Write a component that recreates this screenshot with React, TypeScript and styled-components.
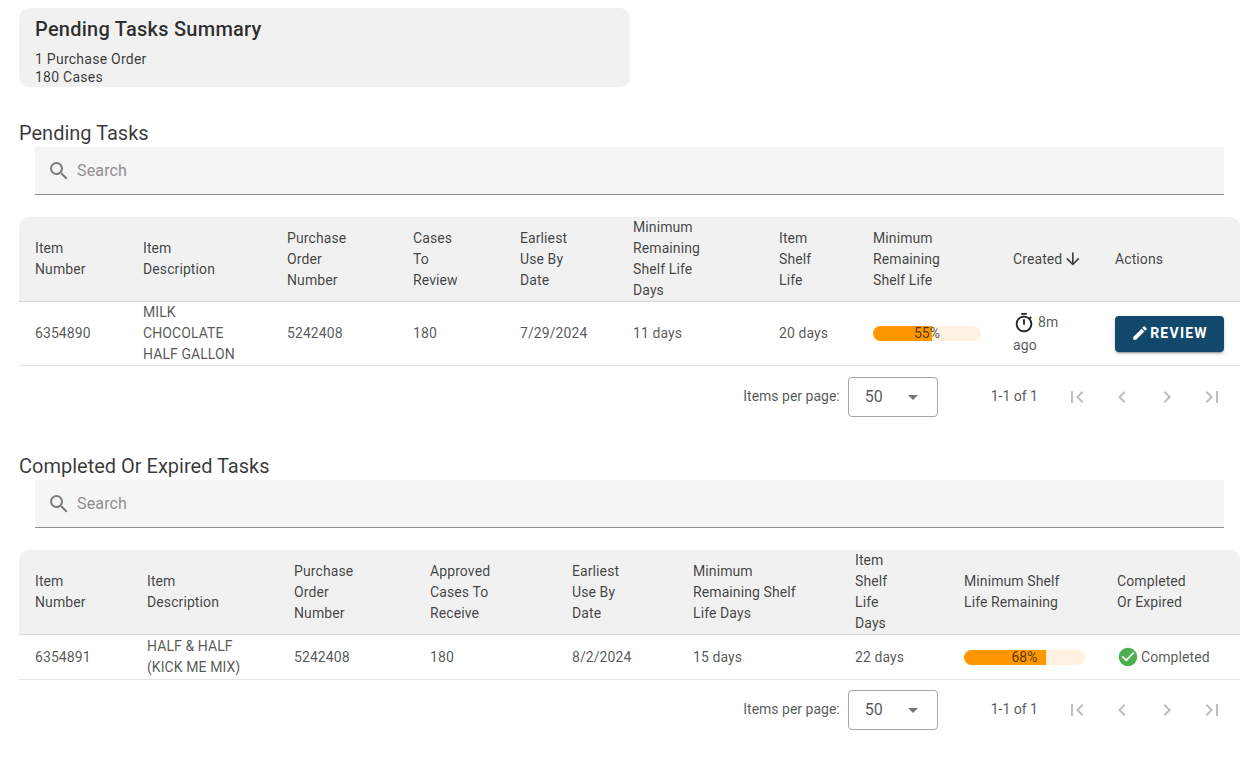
import React from "react";
import styled, { createGlobalStyle } from "styled-components";
import {
	MdArrowDownward,
	MdCheckCircle,
	MdChevronLeft,
	MdChevronRight,
	MdEdit,
	MdFirstPage,
	MdLastPage,
	MdOutlineTimer,
	MdSearch,
} from "react-icons/md";

const GlobalStyle = createGlobalStyle`
	html, body {
		margin: 0;
		padding: 0;
		background: #fff;
		font-family: Roboto, "Liberation Sans", sans-serif;
		color: rgba(0, 0, 0, 0.87);
	}
`;

const pendingColumns = [108, 144, 126, 107, 113, 146, 94, 140, 102, 141];
const completedColumns = [112, 147, 136, 142, 121, 162, 109, 153, 139];

const Lines = ({ lines }: { lines: string[] }) => (
	<>
		{lines.map((line) => (
			<div key={line}>{line}</div>
		))}
	</>
);

const Colgroup = ({ widths }: { widths: number[] }) => (
	<colgroup>
		{widths.map((w, i) => (
			<col key={i} style={{ width: w }} />
		))}
	</colgroup>
);

const Progress = ({ value, width }: { value: number; width: number }) => (
	<Track $width={width}>
		<Fill style={{ width: `${value}%` }} />
		<TrackLabel>{value}%</TrackLabel>
	</Track>
);

const SearchField = () => (
	<SearchBox>
		<MdSearch size={24} color="#7a7a7a" />
		<SearchText>Search</SearchText>
	</SearchBox>
);

const Paginator = ({ height }: { height: number }) => (
	<PaginatorBar $height={height}>
		<PerPageLabel>Items per page:</PerPageLabel>
		<PerPageSelect>
			<PerPageValue>50</PerPageValue>
			<Caret />
		</PerPageSelect>
		<RangeLabel>1-1 of 1</RangeLabel>
		<PageIcons>
			<MdFirstPage size={24} />
			<MdChevronLeft size={24} />
			<MdChevronRight size={24} />
			<MdLastPage size={24} />
		</PageIcons>
	</PaginatorBar>
);

const pendingHeaders = [
	["Item", "Number"],
	["Item", "Description"],
	["Purchase", "Order", "Number"],
	["Cases", "To", "Review"],
	["Earliest", "Use By", "Date"],
	["Minimum", "Remaining", "Shelf Life", "Days"],
	["Item", "Shelf", "Life"],
	["Minimum", "Remaining", "Shelf Life"],
];

const completedHeaders = [
	["Item", "Number"],
	["Item", "Description"],
	["Purchase", "Order", "Number"],
	["Approved", "Cases To", "Receive"],
	["Earliest", "Use By", "Date"],
	["Minimum", "Remaining Shelf", "Life Days"],
	["Item", "Shelf", "Life", "Days"],
	["Minimum Shelf", "Life Remaining"],
	["Completed", "Or Expired"],
];

const App = () => (
	<Page>
		<GlobalStyle />
		<SummaryCard>
			<SummaryTitle>Pending Tasks Summary</SummaryTitle>
			<SummaryLine>1 Purchase Order</SummaryLine>
			<SummaryLine>180 Cases</SummaryLine>
		</SummaryCard>

		<Section>
			<SectionTitle>Pending Tasks</SectionTitle>
			<SearchField />
			<Table>
				<Colgroup widths={pendingColumns} />
				<thead>
					<tr>
						{pendingHeaders.map((lines, i) => (
							<HeadCell key={i}>
								<Lines lines={lines} />
							</HeadCell>
						))}
						<HeadCell>
							<SortLabel>
								Created
								<MdArrowDownward size={20} />
							</SortLabel>
						</HeadCell>
						<HeadCell>Actions</HeadCell>
					</tr>
				</thead>
				<tbody>
					<tr>
						<BodyCell>6354890</BodyCell>
						<BodyCell>
							<Lines lines={["MILK", "CHOCOLATE", "HALF GALLON"]} />
						</BodyCell>
						<BodyCell>5242408</BodyCell>
						<BodyCell>180</BodyCell>
						<BodyCell>7/29/2024</BodyCell>
						<BodyCell>11 days</BodyCell>
						<BodyCell>20 days</BodyCell>
						<BodyCell>
							<Progress value={55} width={108} />
						</BodyCell>
						<BodyCell>
							<TimerLine>
								<MdOutlineTimer size={22} color="#222" />
								<TimerValue>8m</TimerValue>
							</TimerLine>
							<div>ago</div>
						</BodyCell>
						<BodyCell>
							<ReviewButton>
								<MdEdit size={18} />
								REVIEW
							</ReviewButton>
						</BodyCell>
					</tr>
				</tbody>
			</Table>
			<Paginator height={62} />
		</Section>

		<Section>
			<SectionTitle>Completed Or Expired Tasks</SectionTitle>
			<SearchField />
			<Table>
				<Colgroup widths={completedColumns} />
				<thead>
					<tr>
						{completedHeaders.map((lines, i) => (
							<HeadCell key={i}>
								<Lines lines={lines} />
							</HeadCell>
						))}
					</tr>
				</thead>
				<tbody>
					<tr>
						<BodyCell>6354891</BodyCell>
						<BodyCell>
							<Lines lines={["HALF & HALF", "(KICK ME MIX)"]} />
						</BodyCell>
						<BodyCell>5242408</BodyCell>
						<BodyCell>180</BodyCell>
						<BodyCell>8/2/2024</BodyCell>
						<BodyCell>15 days</BodyCell>
						<BodyCell>22 days</BodyCell>
						<BodyCell>
							<Progress value={68} width={121} />
						</BodyCell>
						<BodyCell>
							<StatusLine>
								<MdCheckCircle size={22} color="#4caf50" />
								Completed
							</StatusLine>
						</BodyCell>
					</tr>
				</tbody>
			</Table>
			<Paginator height={60} />
		</Section>
	</Page>
);

const Page = styled.div`
	width: 1221px;
	padding: 8px 0 0 19px;
`;

const SummaryCard = styled.div`
	width: 611px;
	height: 79px;
	box-sizing: border-box;
	padding: 7px 16px 0;
	background: #f1f1f1;
	border-radius: 10px;
	overflow: hidden;
	margin-bottom: 32px;
`;

const SummaryTitle = styled.div`
	font-size: 20px;
	font-weight: 500;
	line-height: 28px;
	letter-spacing: 0.25px;
	color: rgba(0, 0, 0, 0.82);
	margin-bottom: 7px;
`;

const SummaryLine = styled.div`
	font-size: 14px;
	line-height: 18px;
	letter-spacing: 0.25px;
	color: rgba(0, 0, 0, 0.78);
`;

const Section = styled.section`
	margin-bottom: 24px;
`;

const SectionTitle = styled.h2`
	margin: 0;
	font-size: 20px;
	font-weight: 400;
	line-height: 28px;
	letter-spacing: 0;
	color: rgba(0, 0, 0, 0.78);
`;

const SearchBox = styled.div`
	display: flex;
	align-items: center;
	gap: 6px;
	height: 48px;
	box-sizing: border-box;
	width: 1189px;
	margin: 0 0 22px 16px;
	padding: 0 12px;
	background: #f5f5f5;
	border-bottom: 1px solid #8c8c8c;
`;

const SearchText = styled.span`
	font-size: 16px;
	letter-spacing: 0.15px;
	color: #8f8f8f;
`;

const Table = styled.table`
	width: 1221px;
	table-layout: fixed;
	border-collapse: separate;
	border-spacing: 0;
`;

const HeadCell = styled.th`
	height: 84px;
	box-sizing: content-box;
	padding: 0 16px;
	background: #f1f1f1;
	border-bottom: 1px solid #d9d9d9;
	font-size: 14px;
	font-weight: 400;
	line-height: 21px;
	letter-spacing: 0.1px;
	text-align: left;
	color: rgba(0, 0, 0, 0.74);
	white-space: nowrap;

	&:first-child {
		border-top-left-radius: 10px;
	}

	&:last-child {
		border-top-right-radius: 10px;
	}
`;

const BodyCell = styled.td`
	height: 44px;
	box-sizing: content-box;
	padding: 0 16px;
	border-bottom: 1px solid #e4e4e4;
	font-size: 14px;
	line-height: 21px;
	letter-spacing: 0.08px;
	color: rgba(0, 0, 0, 0.68);
	white-space: nowrap;
`;

const SortLabel = styled.div`
	display: flex;
	align-items: center;
	gap: 1px;
`;

const Track = styled.div<{ $width: number }>`
	position: relative;
	width: ${({ $width }) => $width}px;
	height: 15px;
	border-radius: 8px;
	overflow: hidden;
	background: #fff2e0;
`;

const Fill = styled.div`
	height: 100%;
	background: #ff9800;
`;

const TrackLabel = styled.span`
	position: absolute;
	inset: 0;
	text-align: center;
	font-size: 14px;
	line-height: 15px;
	color: rgba(0, 0, 0, 0.68);
`;

const TimerLine = styled.div`
	display: flex;
	align-items: center;
	gap: 3px;
`;

const TimerValue = styled.span`
	margin-bottom: 2px;
`;

const StatusLine = styled.div`
	display: flex;
	align-items: center;
	gap: 2px;
`;

const ReviewButton = styled.button`
	display: inline-flex;
	align-items: center;
	justify-content: center;
	gap: 1px;
	width: 109px;
	height: 36px;
	padding: 0 0 2px;
	border: 0;
	border-radius: 4px;
	background: #11486b;
	color: #fff;
	font-family: inherit;
	font-size: 14px;
	font-weight: 700;
	letter-spacing: 1.25px;
	box-shadow: 0 3px 1px -2px rgba(0, 0, 0, 0.2), 0 2px 2px rgba(0, 0, 0, 0.14),
		0 1px 5px rgba(0, 0, 0, 0.12);
`;

const PaginatorBar = styled.div<{ $height: number }>`
	display: flex;
	align-items: center;
	height: ${({ $height }) => $height}px;
	padding-right: 16px;
	justify-content: flex-end;
	font-size: 14px;
	color: rgba(0, 0, 0, 0.68);
`;

const PerPageLabel = styled.span`
	margin: 0 8px 2px 0;
`;

const PerPageSelect = styled.div`
	display: flex;
	align-items: center;
	justify-content: space-between;
	box-sizing: border-box;
	width: 90px;
	height: 40px;
	padding: 0 19px 0 16px;
	border: 1px solid #a6a6a6;
	border-radius: 4px;
	font-size: 16px;
`;

const PerPageValue = styled.span`
	margin-bottom: 2px;
`;

const Caret = styled.span`
	width: 0;
	height: 0;
	border-left: 5px solid transparent;
	border-right: 5px solid transparent;
	border-top: 5px solid #757575;
`;

const RangeLabel = styled.span`
	margin: 0 27px 2px 53px;
`;

const PageIcons = styled.div`
	display: flex;
	gap: 21px;
	color: #bdbdbd;
`;

export default App;
